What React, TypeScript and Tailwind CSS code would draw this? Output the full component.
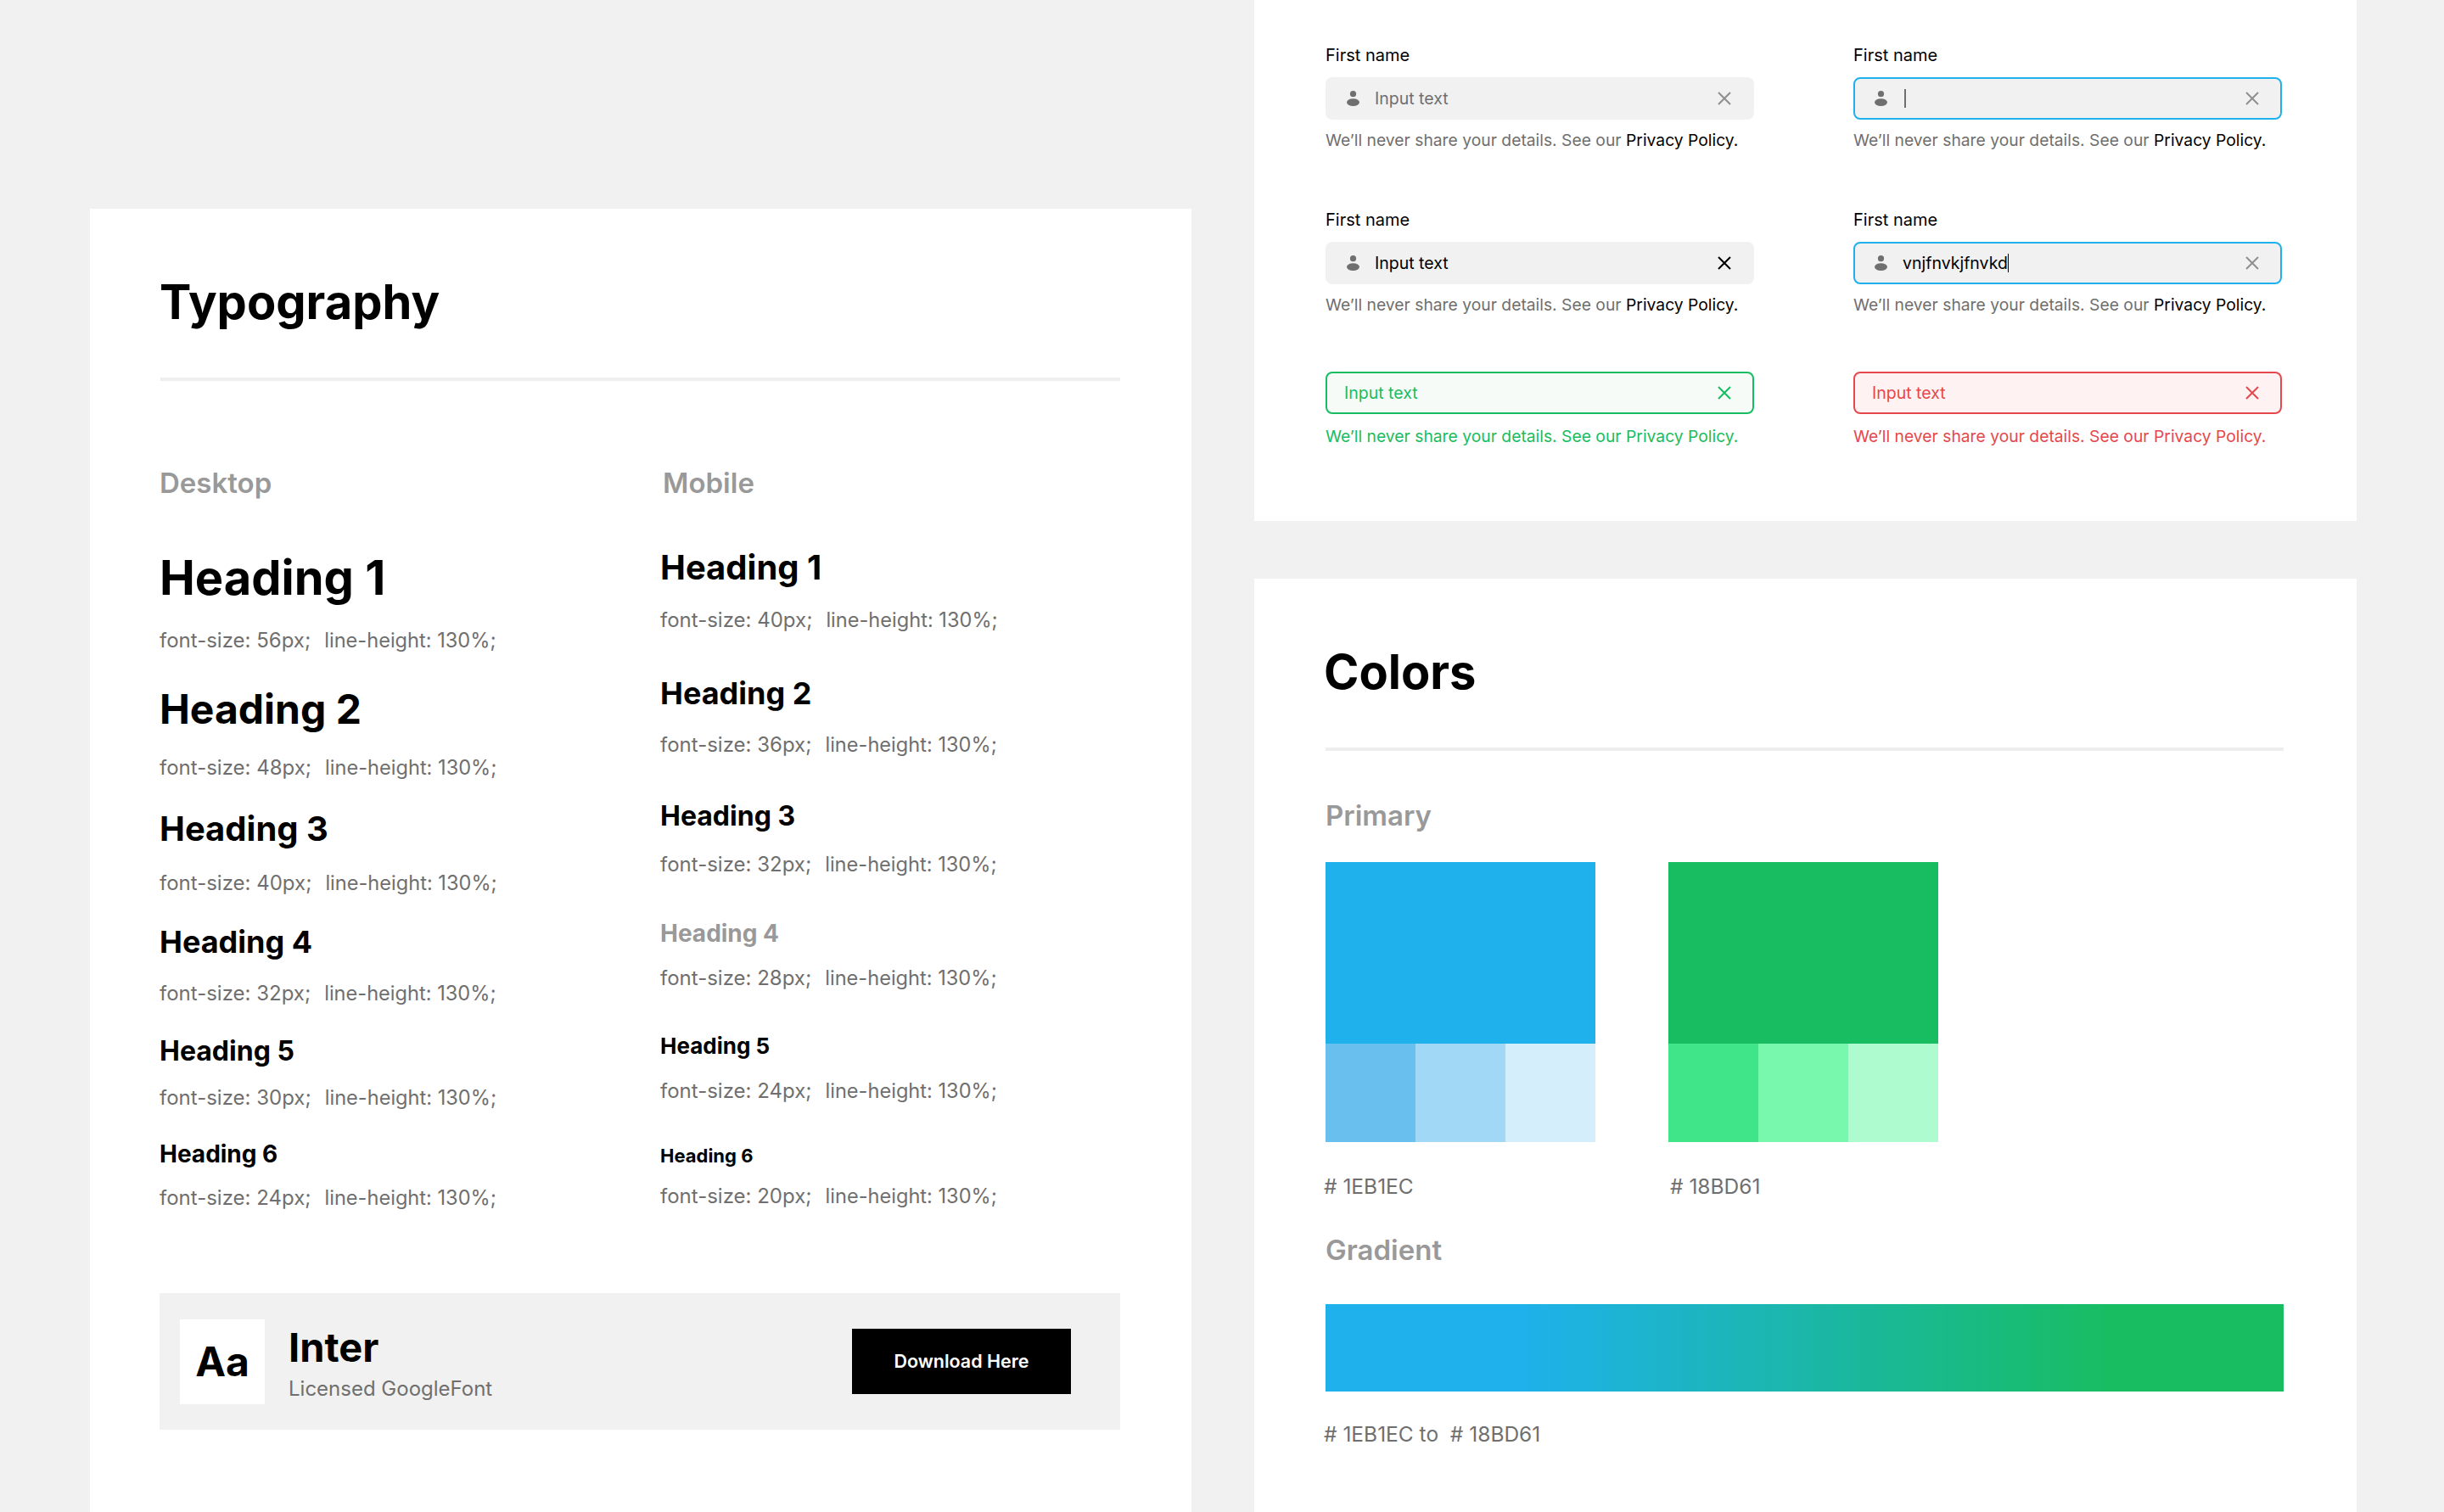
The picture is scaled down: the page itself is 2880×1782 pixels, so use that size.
const desktopRows = [
  { title: "Heading 1", size: "text-[56px] leading-[78px]", rowGap: "mt-[53px]", subGap: "mt-[20px]", px: "56px" },
  { title: "Heading 2", size: "text-[48px] leading-[69px]", rowGap: "mt-[31px]", subGap: "mt-[20px]", px: "48px" },
  { title: "Heading 3", size: "text-[40px] leading-[57px]", rowGap: "mt-[28px]", subGap: "mt-[21px]", px: "40px" },
  { title: "Heading 4", size: "text-[36px] leading-[52px]", rowGap: "mt-[28px]", subGap: "mt-[20px]", px: "32px" },
  { title: "Heading 5", size: "text-[32px] leading-[46px]", rowGap: "mt-[30px]", subGap: "mt-[17px]", px: "30px" },
  { title: "Heading 6", size: "text-[28px] leading-[40px]", rowGap: "mt-[31px]", subGap: "mt-[17px]", px: "24px" },
];

const mobileRows = [
  { title: "Heading 1", size: "text-[40px] leading-[56px]", rowGap: "mt-[52px]", subGap: "mt-[19px]", px: "40px" },
  { title: "Heading 2", size: "text-[36px] leading-[52px]", rowGap: "mt-[45px]", subGap: "mt-[20px]", px: "36px" },
  { title: "Heading 3", size: "text-[32px] leading-[47px]", rowGap: "mt-[45px]", subGap: "mt-[19px]", px: "32px" },
  { title: "Heading 4", size: "text-[28px] leading-[40px] text-[#999999]", rowGap: "mt-[46px]", subGap: "mt-[18px]", px: "28px" },
  { title: "Heading 5", size: "text-[26px] leading-[38px]", rowGap: "mt-[46px]", subGap: "mt-[19px]", px: "24px" },
  { title: "Heading 6", size: "text-[22px] leading-[32px]", rowGap: "mt-[45px]", subGap: "mt-[17px]", px: "20px" },
];

type Row = (typeof desktopRows)[number];

function TypeColumn({ label, rows, labelClass }: { label: string; rows: Row[]; labelClass: string }) {
  return (
    <div>
      <div className={`text-[33px] leading-[40px] font-semibold text-[#999999] ${labelClass}`}>{label}</div>
      {rows.map((r) => (
        <div key={r.title} className={r.rowGap}>
          <div className={`font-bold ${r.size}`}>{r.title}</div>
          <div className={`text-[24px] leading-[30px] text-[#6f6f6f] whitespace-pre ${r.subGap}`}>
            font-size: {r.px};<span className="ml-[16px] text-[23.6px]">line-height: 130%;</span>
          </div>
        </div>
      ))}
    </div>
  );
}

function PersonIcon() {
  return (
    <svg width="15" height="18" viewBox="0 0 15 18" className="shrink-0">
      <circle cx="7.5" cy="3.7" r="3.6" fill="#6f6f6f" />
      <ellipse cx="7.5" cy="13.6" rx="7.5" ry="4.4" fill="#6f6f6f" />
    </svg>
  );
}

function CloseIcon({ color }: { color: string }) {
  return (
    <svg width="16" height="16" viewBox="0 0 16 16" className="shrink-0">
      <path d="M1 1L15 15M15 1L1 15" stroke={color} strokeWidth="2" fill="none" />
    </svg>
  );
}

const helper = "We’ll never share your details. See our ";

function Helper({ tone }: { tone?: string }) {
  if (tone) {
    return <p className={`mt-[12px] text-[19.3px] leading-[28px] ${tone}`}>{helper}Privacy Policy.</p>;
  }
  return (
    <p className="mt-[10px] text-[19.3px] leading-[28px] text-[#6f6f6f]">
      {helper}
      <span className="text-black">Privacy Policy.</span>
    </p>
  );
}

function Label() {
  return <div className="text-[20px] leading-[28px] text-black mb-[12px]">First name</div>;
}

function Field({ className, children }: { className?: string; children: React.ReactNode }) {
  return <div className={`h-[50px] rounded-[8px] flex items-center bg-[#f1f1f1] ${className ?? ""}`}>{children}</div>;
}

function Swatch({ main, shades, code, codeClass }: { main: string; shades: string[]; code: string; codeClass: string }) {
  return (
    <div className="w-[318px]">
      <div className={`h-[214px] ${main}`} />
      <div className="flex h-[116px]">
        {shades.map((s) => (
          <div key={s} className={`flex-1 ${s}`} />
        ))}
      </div>
      <div className={`mt-[36px] text-[24.5px] leading-[32px] text-[#6f6f6f] ${codeClass}`}>{code}</div>
    </div>
  );
}

export default function App() {
  return (
    <div className="flex w-[2880px] h-[1782px] overflow-hidden bg-[#f1f1f1] text-black font-['Inter',sans-serif]">
      {/* Typography */}
      <section className="ml-[106px] mt-[246px] w-[1298px] h-[1536px] bg-white pl-[83px] pr-[84px] pt-[71px]">
        <h1 className="-ml-[1px] text-[56px] leading-[78px] font-bold">Typography</h1>
        <div className="mt-[50px] h-[4px] bg-[#eeeeee]" />
        <div className="-ml-[1px] mt-[100px] grid grid-cols-[590px_1fr]">
          <TypeColumn label="Desktop" rows={desktopRows} labelClass="" />
          <TypeColumn label="Mobile" rows={mobileRows} labelClass="ml-[3px]" />
        </div>
        <div className="-ml-[1px] mt-[97px] h-[161px] bg-[#f1f1f1] pl-[24px] pr-[58px] flex items-center">
          <div className="w-[100px] h-[100px] bg-white flex items-center justify-center text-[48px] font-bold">Aa</div>
          <div className="ml-[28px] mt-[3px]">
            <div className="text-[47px] leading-[58px] font-bold">Inter</div>
            <div className="mt-[4px] text-[24px] leading-[32px] text-[#6f6f6f]">Licensed GoogleFont</div>
          </div>
          <button className="ml-auto w-[258px] h-[77px] bg-black text-white text-[21.5px] font-semibold">Download Here</button>
        </div>
      </section>

      <div className="ml-[74px] w-[1299px] flex flex-col gap-[68px]">
        {/* Inputs */}
        <section className="h-[614px] shrink-0 bg-white pl-[84px] pr-[88px] pt-[51px] grid grid-cols-[505px_505px] gap-x-[117px] content-start">
          <div>
            <Label />
            <Field className="pl-[25px] pr-[27px]">
              <PersonIcon />
              <span className="ml-[18px] mt-[2px] text-[19.5px] text-[#6f6f6f]">Input text</span>
              <span className="ml-auto"><CloseIcon color="#8f8f8f" /></span>
            </Field>
            <Helper />
          </div>
          <div>
            <Label />
            <Field className="pl-[23px] pr-[25px] border-2 border-[#1eb1ec]">
              <PersonIcon />
              <span className="ml-[20px] w-[1.5px] h-[22px] bg-[#6f6f6f]" />
              <span className="ml-auto"><CloseIcon color="#8f8f8f" /></span>
            </Field>
            <Helper />
          </div>

          <div className="mt-[66px]">
            <Label />
            <Field className="pl-[25px] pr-[27px]">
              <PersonIcon />
              <span className="ml-[18px] mt-[2px] text-[19.5px] text-black">Input text</span>
              <span className="ml-auto"><CloseIcon color="#000000" /></span>
            </Field>
            <Helper />
          </div>
          <div className="mt-[66px]">
            <Label />
            <Field className="pl-[23px] pr-[25px] border-2 border-[#1eb1ec]">
              <PersonIcon />
              <span className="ml-[18px] mt-[2px] text-[19.5px] text-black">vnjfnvkjfnvkd</span>
              <span className="w-[1.5px] h-[22px] bg-black" />
              <span className="ml-auto"><CloseIcon color="#8f8f8f" /></span>
            </Field>
            <Helper />
          </div>

          <div className="mt-[65px]">
            <Field className="pl-[20px] pr-[25px] border-2 border-[#18bd61] bg-[#f6fbf8]">
              <span className="mt-[2px] text-[19.5px] text-[#18bd61]">Input text</span>
              <span className="ml-auto"><CloseIcon color="#18bd61" /></span>
            </Field>
            <Helper tone="text-[#18bd61]" />
          </div>
          <div className="mt-[65px]">
            <Field className="pl-[20px] pr-[25px] border-2 border-[#e5484d] bg-[#fef2f2]">
              <span className="mt-[2px] text-[19.5px] text-[#e5484d]">Input text</span>
              <span className="ml-auto"><CloseIcon color="#e5484d" /></span>
            </Field>
            <Helper tone="text-[#e5484d]" />
          </div>
        </section>

        {/* Colors */}
        <section className="flex-1 bg-white pl-[84px] pr-[86px] pt-[71px]">
          <h1 className="-ml-[2px] text-[56px] leading-[78px] font-bold">Colors</h1>
          <div className="mt-[50px] h-[4px] bg-[#eeeeee]" />
          <div className="mt-[56px] text-[33px] leading-[40px] font-semibold text-[#999999]">Primary</div>
          <div className="mt-[35px] flex gap-[86px]">
            <Swatch
              main="bg-[#1eb1ec]"
              shades={["bg-[#69bfee]", "bg-[#a0d8f6]", "bg-[#d5eefb]"]}
              code="# 1EB1EC"
              codeClass="-ml-[2px]"
            />
            <Swatch
              main="bg-[#18bd61]"
              shades={["bg-[#40e589]", "bg-[#78f8ad]", "bg-[#aefbd0]"]}
              code="# 18BD61"
              codeClass="ml-[2px]"
            />
          </div>
          <div className="mt-[39px] text-[33px] leading-[40px] font-semibold text-[#999999]">Gradient</div>
          <div className="mt-[44px] h-[103px] bg-linear-to-r/srgb from-[#1eb1ec] from-[20%] to-[#18bd61] to-[82%]" />
          <div className="-ml-[2px] mt-[34px] text-[24.5px] leading-[32px] text-[#6f6f6f] whitespace-pre"># 1EB1EC to  # 18BD61</div>
        </section>
      </div>
    </div>
  );
}
